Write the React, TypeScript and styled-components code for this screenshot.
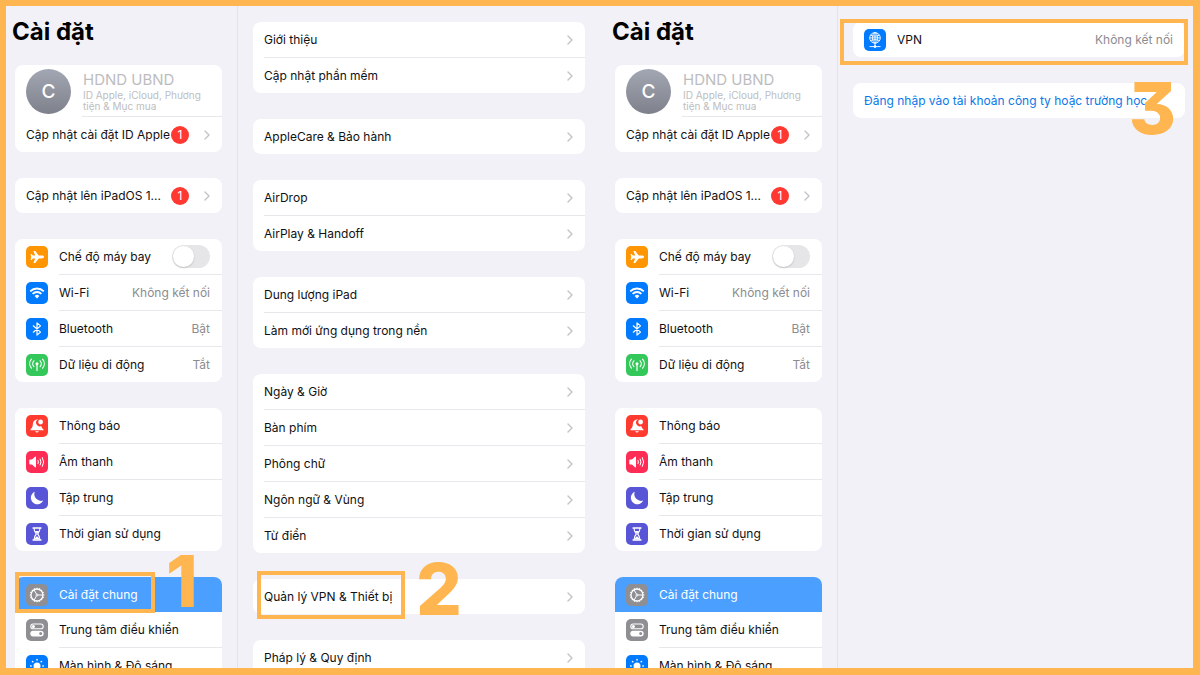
import React, { ReactNode, useId, useState } from "react";
import styled, { createGlobalStyle, css } from "styled-components";

const accent = "#ffb550";

const GlobalStyle = createGlobalStyle`
  *, *::before, *::after { box-sizing: border-box; }
  body {
    margin: 0;
    background: #f2f1f8;
    color: #111113;
    font: 400 12px/16px Inter, "Noto Sans", sans-serif;
  }
  button { font: inherit; color: inherit; }
`;

const Guide = styled.main`
  position: relative;
  display: flex;
  height: 100vh;
  overflow: hidden;

  &::after {
    content: "";
    position: absolute;
    inset: 0;
    z-index: 3;
    border: 6px solid ${accent};
    border-right-width: 7px;
    border-bottom-width: 7px;
    pointer-events: none;
  }
`;

const Device = styled.section`
  display: flex;
  flex: 1;
  min-width: 0;
`;

const Sidebar = styled.nav`
  flex: none;
  width: 238px;
  padding: 16px 15px 0;
  border-right: 1px solid #e4e3ec;
`;

const Title = styled.h1`
  margin: 0 0 17px -3px;
  color: #000;
  font-size: 24px;
  line-height: 32px;
  font-weight: 700;
`;

const Stack = styled.div`
  display: flex;
  flex-direction: column;
  gap: 26px;
`;

const Detail = styled.div`
  flex: 1;
  min-width: 0;
  padding: 22px 15px 0;
`;

const Card = styled.ul`
  margin: 0;
  padding: 0;
  list-style: none;
  border-radius: 8px;
  background: #fff;
`;

const Body = styled.span<{ $plain?: boolean }>`
  display: flex;
  flex: 1;
  align-items: center;
  min-width: 0;
  height: ${(p) => (p.$plain ? 35 : 36)}px;
  padding-right: 12px;
  border-bottom: ${(p) => (p.$plain ? "0" : "1px solid #e8e8ec")};
`;

const Item = styled.li`
  position: relative;

  &:last-child ${Body} {
    height: 35px;
    border-bottom: 0;
  }
`;

const rowStyle = css`
  display: flex;
  align-items: center;
  gap: 11px;
  width: 100%;
  padding: 0 0 0 11px;
  border: 0;
  background: none;
  text-align: left;
  text-decoration: none;
`;

const Row = styled.button<{ $selected?: boolean }>`
  ${rowStyle}
  cursor: pointer;
  ${(p) =>
    p.$selected &&
    css`
      border-radius: 8px 8px 0 0;
      background: #4ba0ff;
      color: #fff;
    `}
`;

const SwitchRow = styled.label`
  ${rowStyle}
`;

const LinkRow = styled.a`
  ${rowStyle}
  color: #0a78e8;
`;

const Label = styled.span`
  flex: 1;
  min-width: 0;
  overflow: hidden;
  white-space: nowrap;
  text-overflow: ellipsis;
`;

const Value = styled.span`
  color: #8c8c90;
  white-space: nowrap;
`;

const Badge = styled.span`
  flex: none;
  width: 18px;
  margin-right: 15px;
  border-radius: 9px;
  background: #ff3931;
  color: #fff;
  line-height: 18px;
  text-align: center;
`;

const Switch = styled.input`
  appearance: none;
  display: flex;
  width: 38px;
  height: 23px;
  margin: 0;
  padding: 1px;
  border-radius: 12px;
  background: #e6e6e9;

  &::before {
    content: "";
    width: 21px;
    height: 21px;
    border-radius: 50%;
    background: #fff;
    box-shadow: 0 1px 2px rgba(0, 0, 0, 0.16);
  }
  &:checked {
    justify-content: flex-end;
    background: #34c759;
  }
`;

const IconTile = styled.svg`
  flex: none;
  display: block;
  width: 22px;
  height: 22px;
  border-radius: 5px;
`;

const ChevronMark = styled.svg`
  flex: none;
  display: block;
  width: 6px;
  height: 10px;
`;

const ProfileRow = styled.button`
  ${rowStyle}
  height: 52px;
  cursor: pointer;
`;

const Avatar = styled.span`
  flex: none;
  width: 45px;
  border-radius: 50%;
  background: linear-gradient(#a3a7b3, #7e818b);
  color: #fff;
  font-size: 19px;
  font-weight: 500;
  line-height: 45px;
  text-align: center;
`;

const ProfileText = styled.span`
  display: block;
  flex: 1;
  height: 52px;
  padding: 5px 12px 0 1px;
  border-bottom: 1px solid #e8e8ec;
  color: #bdbdc0;
`;

const ProfileName = styled.span`
  display: block;
  font-size: 15px;
  line-height: 20px;
`;

const ProfileNote = styled.span`
  display: block;
  font-size: 10px;
  line-height: 11px;
`;

const Highlight = styled.span<{ $box: string; $width?: string }>`
  position: absolute;
  inset: ${(p) => p.$box};
  z-index: 1;
  width: ${(p) => p.$width ?? "auto"};
  border: 4px solid ${accent};
  pointer-events: none;
`;

const StepNumber = styled.strong<{ $at: string }>`
  position: absolute;
  inset: ${(p) => p.$at};
  z-index: 2;
  color: ${accent};
  font-size: 72px;
  font-weight: 800;
  line-height: 72px;
  font-feature-settings: "cv09";
  pointer-events: none;
`;

type IconName =
  | "plane" | "wifi" | "bluetooth" | "cellular" | "bell" | "sound"
  | "moon" | "hourglass" | "gear" | "controls" | "sun" | "vpn";

const gearTeeth = Array.from({ length: 16 }, (_, i) => i * 22.5);
const sunRays = Array.from({ length: 8 }, (_, i) => i * 45);

const icons: Record<IconName, { color: string; art: ReactNode }> = {
  plane: {
    color: "#ff9500",
    art: <path fill="#fff" d="M18 11c0-.9-1.100-1.400-2.300-1.400h-3L9.200 5H7.400l1.800 4.600H7L5.500 8h-1L5.300 11l-.8 3h1L7 12.400h2.200L7.400 17h1.800l3.500-4.600h3c1.200 0 2.300-.5 2.300-1.400z" />,
  },
  wifi: {
    color: "#007aff",
    art: (
      <>
        <path stroke="#fff" strokeWidth="1.800" d="M4.200 9.300a9.700 9.700 0 0 1 13.600 0M6.600 11.800a6.300 6.300 0 0 1 8.800 0" />
        <path fill="#fff" d="M11 16.500 8.600 14a3.400 3.400 0 0 1 4.800 0z" />
      </>
    ),
  },
  bluetooth: {
    color: "#007aff",
    art: <path stroke="#fff" strokeWidth="1.200" strokeLinejoin="round" strokeLinecap="round" d="m7.300 7.800 7.200 6.300-3.500 3V4.900l3.500 3-7.200 6.300" />,
  },
  cellular: {
    color: "#34c759",
    art: (
      <>
        <circle cx="11" cy="9.700" r="1.500" fill="#fff" />
        <path stroke="#fff" strokeWidth="1.200" strokeLinecap="round" d="M11 10.500v6M7.900 12.600a4.200 4.200 0 0 1 0-5.800M14.100 12.600a4.200 4.200 0 0 0 0-5.800M5.400 14.200a7 7 0 0 1 0-9M16.600 14.200a7 7 0 0 0 0-9" />
      </>
    ),
  },
  bell: {
    color: "#ff3b30",
    art: (
      <>
        <path fill="#fff" d="M11 4.400c-2.700.1-4 2.100-4.100 4.400-.1 3.100-.9 4.400-2.400 5.500v1h13v-1c-1.200-.9-1.900-1.900-2.200-3.400a3.600 3.600 0 0 1-3.300-6.400zM9.200 16.200h3.600a1.900 1.900 0 0 1-3.600 0z" />
        <circle cx="14.600" cy="7" r="2.400" fill="#fff" />
      </>
    ),
  },
  sound: {
    color: "#ff2d55",
    art: (
      <>
        <path fill="#fff" d="M3.300 9.200c0-.4.3-.7.700-.7h2l3-2.700c.5-.4 1-.2 1 .4v9.600c0 .6-.5.8-1 .4l-3-2.700H4a.7.7 0 0 1-.7-.7z" />
        <path stroke="#fff" strokeWidth="1" strokeLinecap="round" d="M12 9.300a3.500 3.500 0 0 1 0 3.400M14.200 8a6 6 0 0 1 0 6M16.400 6.600a8.500 8.500 0 0 1 0 8.800" />
      </>
    ),
  },
  moon: {
    color: "#5856d6",
    art: <path fill="#fff" d="M8.700 4.800a6.500 6.500 0 1 0 8.500 8.800A6.900 6.900 0 0 1 8.700 4.800z" />,
  },
  hourglass: {
    color: "#5856d6",
    art: (
      <>
        <path stroke="#fff" strokeWidth="1.500" strokeLinecap="round" d="M7.100 5.100h7.800M7.100 16.900h7.800" />
        <path stroke="#fff" strokeWidth="1.100" d="M8 5c0 3.200.7 4.300 2.300 6C8.700 12.700 8 13.800 8 17M14 5c0 3.200-.7 4.300-2.300 6 1.600 1.700 2.300 2.800 2.300 6" />
        <path fill="#fff" d="M8.900 8h4.200c-.4 1-1.100 1.700-2.100 2.600C10 9.700 9.300 9 8.900 8zM8.300 16.500c.2-1.600 1.300-2.200 2.700-3.200 1.400 1 2.500 1.600 2.700 3.200z" />
      </>
    ),
  },
  gear: {
    color: "#8e8e93",
    art: (
      <g stroke="#fff">
        {gearTeeth.map((angle) => (
          <path key={angle} strokeWidth="1" d="M11 3.700v1.200" transform={`rotate(${angle} 11 11)`} />
        ))}
        <circle cx="11" cy="11" r="6" strokeWidth="1.300" />
        <circle cx="11" cy="11" r="1" strokeWidth="1" />
        <path strokeWidth="1" d="M12.200 11H17M10.400 9.900 8 5.800M10.400 12.100 8 16.200" />
      </g>
    ),
  },
  controls: {
    color: "#8e8e93",
    art: (
      <>
        <rect x="4.800" y="5" width="12.400" height="4.800" rx="2.400" stroke="#fff" strokeWidth="1.100" />
        <circle cx="7.400" cy="7.400" r="1.500" fill="#fff" />
        <rect x="4.300" y="11.700" width="13.400" height="5.800" rx="2.900" fill="#fff" />
        <circle cx="14.700" cy="14.600" r="1.500" fill="#8e8e93" />
      </>
    ),
  },
  sun: {
    color: "#007aff",
    art: (
      <>
        <circle cx="11" cy="11" r="3.500" fill="#fff" />
        {sunRays.map((angle) => (
          <path key={angle} stroke="#fff" strokeWidth="1.500" strokeLinecap="round" d="M11 4.600v.5" transform={`rotate(${angle} 11 11)`} />
        ))}
      </>
    ),
  },
  vpn: {
    color: "#007aff",
    art: (
      <g stroke="#fff" strokeWidth=".9">
        <circle cx="11" cy="8.900" r="5.300" />
        <ellipse cx="11" cy="8.900" rx="2.500" ry="5.300" />
        <path d="M11 3.600v14M5.700 8.900h10.600M6.500 6.200c2.700 1.200 6.300 1.200 9 0M6.500 11.600c2.700-1.200 6.300-1.200 9 0M5.500 17.600h11" />
        <circle cx="11" cy="17.600" r="1" fill="#fff" />
      </g>
    ),
  },
};

function Icon({ name }: { name: IconName }) {
  const { color, art } = icons[name];
  return (
    <IconTile viewBox="0 0 22 22" fill="none" aria-hidden="true">
      <rect width="22" height="22" fill={color} />
      {art}
    </IconTile>
  );
}

function Chevron() {
  return (
    <ChevronMark viewBox="0 0 6 10" fill="none" aria-hidden="true">
      <path d="M1 1l4 4-4 4" stroke="#c4c4c8" strokeWidth="1.400" strokeLinecap="round" strokeLinejoin="round" />
    </ChevronMark>
  );
}

interface CellProps {
  label: string;
  icon?: IconName;
  value?: string;
  badge?: number;
  chevron?: boolean;
  selected?: boolean;
  children?: ReactNode;
}

function Cell({ label, icon, value, badge, chevron, selected, children }: CellProps) {
  return (
    <Item>
      <Row type="button" $selected={selected} aria-current={selected ? "page" : undefined}>
        {icon && <Icon name={icon} />}
        <Body $plain={selected}>
          <Label>{label}</Label>
          {value && <Value>{value}</Value>}
          {badge && <Badge>{badge}</Badge>}
          {chevron && <Chevron />}
        </Body>
      </Row>
      {children}
    </Item>
  );
}

function AirplaneCell() {
  const id = useId();
  const [on, setOn] = useState(false);
  return (
    <Item>
      <SwitchRow htmlFor={id}>
        <Icon name="plane" />
        <Body>
          <Label>Chế độ máy bay</Label>
          <Switch id={id} type="checkbox" role="switch" checked={on} onChange={() => setOn(!on)} />
        </Body>
      </SwitchRow>
    </Item>
  );
}

function SettingsSidebar({ generalMark }: { generalMark?: ReactNode }) {
  return (
    <Sidebar aria-label="Cài đặt">
      <Title>Cài đặt</Title>
      <Stack>
        <Card>
          <Item>
            <ProfileRow type="button">
              <Avatar>C</Avatar>
              <ProfileText>
                <ProfileName>HDND UBND</ProfileName>
                <ProfileNote>ID Apple, iCloud, Phương tiện &amp; Mục mua</ProfileNote>
              </ProfileText>
            </ProfileRow>
          </Item>
          <Cell label="Cập nhật cài đặt ID Apple" badge={1} chevron />
        </Card>
        <Card>
          <Cell label="Cập nhật lên iPadOS 1..." badge={1} chevron />
        </Card>
        <Card>
          <AirplaneCell />
          <Cell icon="wifi" label="Wi-Fi" value="Không kết nối" />
          <Cell icon="bluetooth" label="Bluetooth" value="Bật" />
          <Cell icon="cellular" label="Dữ liệu di động" value="Tắt" />
        </Card>
        <Card>
          <Cell icon="bell" label="Thông báo" />
          <Cell icon="sound" label="Âm thanh" />
          <Cell icon="moon" label="Tập trung" />
          <Cell icon="hourglass" label="Thời gian sử dụng" />
        </Card>
        <Card>
          <Cell icon="gear" label="Cài đặt chung" selected>
            {generalMark}
          </Cell>
          <Cell icon="controls" label="Trung tâm điều khiển" />
          <Cell icon="sun" label="Màn hình &amp; Độ sáng" />
        </Card>
      </Stack>
    </Sidebar>
  );
}

const generalGroups = [
  ["Giới thiệu", "Cập nhật phần mềm"],
  ["AppleCare & Bảo hành"],
  ["AirDrop", "AirPlay & Handoff"],
  ["Dung lượng iPad", "Làm mới ứng dụng trong nền"],
  ["Ngày & Giờ", "Bàn phím", "Phông chữ", "Ngôn ngữ & Vùng", "Từ điển"],
];

export default function App() {
  return (
    <>
      <GlobalStyle />
      <Guide>
        <Device>
          <SettingsSidebar
            generalMark={
              <>
                <Highlight $box="-5px auto -1px 0" $width="140px" />
                <StepNumber $at="-32px auto auto 151px">1</StepNumber>
              </>
            }
          />
          <Detail>
            <Stack>
              {generalGroups.map((group) => (
                <Card key={group[0]}>
                  {group.map((label) => (
                    <Cell key={label} label={label} chevron />
                  ))}
                </Card>
              ))}
              <Card>
                <Cell label="Quản lý VPN & Thiết bị" chevron>
                  <Highlight $box="-8px auto -5px 4px" $width="148px" />
                  <StepNumber $at="-26px auto auto 163px">2</StepNumber>
                </Cell>
              </Card>
              <Card>
                <Cell label="Pháp lý & Quy định" chevron />
              </Card>
            </Stack>
          </Detail>
        </Device>
        <Device>
          <SettingsSidebar />
          <Detail>
            <Stack>
              <Card>
                <Cell icon="vpn" label="VPN" value="Không kết nối">
                  <Highlight $box="-3px -3px -8px -13px" />
                </Cell>
              </Card>
              <Card>
                <Item>
                  <LinkRow href="#sign-in">
                    <Body>
                      <Label>Đăng nhập vào tài khoản công ty hoặc trường học.</Label>
                    </Body>
                  </LinkRow>
                  <StepNumber $at="-11px 9px auto auto">3</StepNumber>
                </Item>
              </Card>
            </Stack>
          </Detail>
        </Device>
      </Guide>
    </>
  );
}
